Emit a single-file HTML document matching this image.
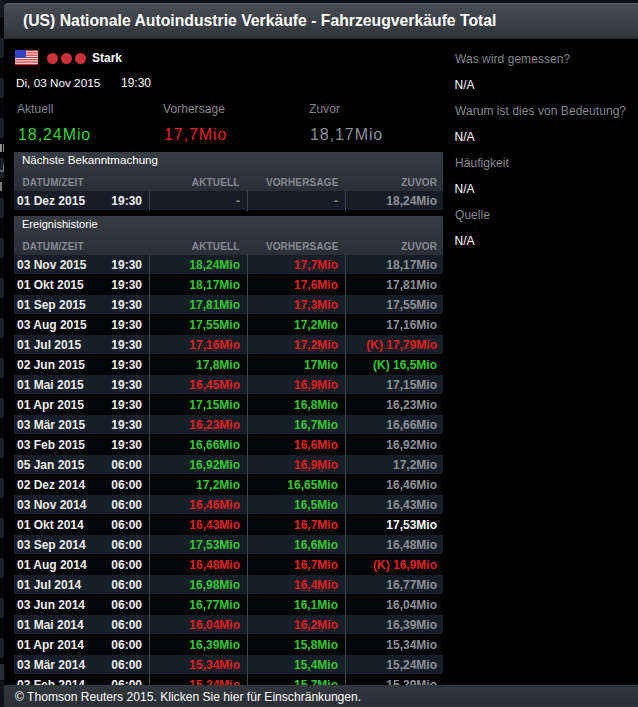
<!DOCTYPE html>
<html><head><meta charset="utf-8">
<style>
*{margin:0;padding:0;box-sizing:border-box}
html,body{width:638px;height:707px;overflow:hidden;background:#000;font-family:"Liberation Sans",sans-serif;position:relative}
.abs{position:absolute;white-space:nowrap}
#bg{position:absolute;left:0;top:0;width:638px;height:707px;background:#050607}
#pop{position:absolute;left:4px;top:3px;width:700px;height:720px;background:#000;border-radius:4px 0 0 0}
#title{position:absolute;left:4px;top:3px;width:700px;height:36px;border-radius:4px 0 0 0;background:linear-gradient(#484c53,#30343b);border-top:1px solid #5e6269;border-bottom:1px solid #24272c}
#ttl{left:23px;top:12px;font-size:15.75px;font-weight:bold;color:#fff}
.lbl{color:#84878b;font-size:12px;letter-spacing:0.05px}
.wt{color:#fff;font-size:12px}
.big{font-size:16px;letter-spacing:0.92px} .big.g{color:#36d236} .big.r{color:#e8222a}
.g{color:#2ec82e} .r{color:#e02020} .n{color:#8c9197} .w{color:#fff}
.sech{position:absolute;left:14px;width:429px;height:39px;background:linear-gradient(#373c44,#2a2f37);color:#fff;font-size:11.6px;padding-left:8px;line-height:16px}
.colh{position:absolute;left:14px;width:429px;height:22px;background:transparent;color:#858b93;font-size:10px;font-weight:bold;letter-spacing:0.15px}
.colh span{position:absolute;top:7.5px;white-space:nowrap}
.row{position:absolute;left:14px;width:429px;height:20px;font-size:12px;font-weight:bold}
.row.o{background:#161e28;height:19px}
.row.e{background:#030405}
.row span{position:absolute;top:2.5px;white-space:nowrap}
.row .d{left:3px;color:#eee}
.row .t{right:301px;color:#eee}
.row .a{right:203px}
.row .f{right:105px}
.row .p{right:6px}
.vl{position:absolute;width:1px;background:#40464e}
#foot{position:absolute;left:4px;top:685px;width:700px;height:22px;background:linear-gradient(#32363d,#2a2e35)}
</style></head><body>
<div id="bg"></div><div class="abs" style="left:0;top:0;width:638px;height:3px;background:#0d1217"></div>
<div class="abs" style="left:0;top:0;width:4px;height:17px;background:#15191e"></div><div class="abs" style="left:0;top:38px;width:4px;height:20px;background:#1b2128;border-radius:0 2px 2px 0"></div><div class="abs" style="left:0;top:78px;width:4px;height:20px;background:#1b2128;border-radius:0 2px 2px 0"></div><div class="abs" style="left:0;top:118px;width:4px;height:20px;background:#1b2128;border-radius:0 2px 2px 0"></div><div class="abs" style="left:0;top:158px;width:4px;height:20px;background:#1b2128;border-radius:0 2px 2px 0"></div><div class="abs" style="left:0;top:198px;width:4px;height:20px;background:#1b2128;border-radius:0 2px 2px 0"></div><div class="abs" style="left:0;top:238px;width:4px;height:20px;background:#1b2128;border-radius:0 2px 2px 0"></div><div class="abs" style="left:0;top:278px;width:4px;height:20px;background:#1b2128;border-radius:0 2px 2px 0"></div><div class="abs" style="left:0;top:318px;width:4px;height:20px;background:#1b2128;border-radius:0 2px 2px 0"></div><div class="abs" style="left:0;top:358px;width:4px;height:20px;background:#1b2128;border-radius:0 2px 2px 0"></div><div class="abs" style="left:0;top:398px;width:4px;height:20px;background:#1b2128;border-radius:0 2px 2px 0"></div><div class="abs" style="left:0;top:438px;width:4px;height:20px;background:#1b2128;border-radius:0 2px 2px 0"></div><div class="abs" style="left:0;top:478px;width:4px;height:20px;background:#1b2128;border-radius:0 2px 2px 0"></div><div class="abs" style="left:0;top:518px;width:4px;height:20px;background:#1b2128;border-radius:0 2px 2px 0"></div><div class="abs" style="left:0;top:558px;width:4px;height:20px;background:#1b2128;border-radius:0 2px 2px 0"></div><div class="abs" style="left:0;top:598px;width:4px;height:20px;background:#1b2128;border-radius:0 2px 2px 0"></div><div class="abs" style="left:0;top:638px;width:4px;height:20px;background:#1b2128;border-radius:0 2px 2px 0"></div><div class="abs" style="left:0;top:664px;width:4px;height:16px;background:#2a2e33"></div><div class="abs" style="left:0;top:680px;width:4px;height:27px;background:#0f1419"></div>
<div class="abs" style="left:0;top:144px;width:1.5px;height:8px;background:#8e8e8e"></div><div class="abs" style="left:3px;top:144px;width:1.5px;height:8px;background:#8e8e8e"></div><div class="abs" style="left:3px;top:164px;width:1.2px;height:8px;background:#6a7886"></div><div class="abs" style="left:0;top:170px;width:4px;height:1.5px;background:#5a6876"></div><div class="abs" style="left:0;top:182px;width:2px;height:9px;background:#7a7a7a"></div>
<div id="pop"></div>
<div id="title"></div>
<div id="ttl" class="abs">(US) Nationale Autoindustrie Verkäufe - Fahrzeugverkäufe Total</div>
<svg class="abs" style="left:15px;top:50px" width="23" height="15" viewBox="0 0 23 15">
<rect width="23" height="15" fill="#fff2f2"/>
<g fill="#d42a2a"><rect y="0" width="23" height="1.15"/><rect y="2.3" width="23" height="1.15"/><rect y="4.6" width="23" height="1.15"/><rect y="6.9" width="23" height="1.15"/><rect y="9.2" width="23" height="1.15"/><rect y="11.5" width="23" height="1.15"/><rect y="13.8" width="23" height="1.2"/></g>
<rect width="11" height="8" fill="#3344c0"/>
</svg>
<div class="abs" style="left:47px;top:52.7px;width:11.2px;height:11.2px;border-radius:50%;background:#cc3038"></div>
<div class="abs" style="left:61px;top:52.7px;width:11.2px;height:11.2px;border-radius:50%;background:#cc3038"></div>
<div class="abs" style="left:75px;top:52.7px;width:11.2px;height:11.2px;border-radius:50%;background:#cc3038"></div>
<div class="abs" style="left:92px;top:51px;font-size:12px;font-weight:bold;color:#fff">Stark</div>
<div class="abs wt" style="left:16px;top:76px;font-size:11.75px">Di, 03 Nov 2015</div>
<div class="abs wt" style="left:121px;top:76px">19:30</div>
<div class="abs lbl" style="left:17px;top:102px">Aktuell</div>
<div class="abs lbl" style="left:163px;top:102px">Vorhersage</div>
<div class="abs lbl" style="left:309px;top:102px">Zuvor</div>
<div class="abs big g" style="left:18px;top:125.5px">18,24Mio</div>
<div class="abs big r" style="left:164px;top:125.5px">17,7Mio</div>
<div class="abs big n" style="left:310px;top:125.5px">18,17Mio</div>

<div class="sech" style="top:152px">Nächste Bekanntmachung</div>
<div class="colh" style="top:169px"><span style="left:8.5px">DATUM/ZEIT</span><span style="right:203.5px">AKTUELL</span><span style="right:104.5px">VORHERSAGE</span><span style="right:6px">ZUVOR</span></div>
<div class="row o" style="top:191px;background:#161d26"><span class="d">01 Dez 2015</span><span class="t">19:30</span><span class="a n">-</span><span class="f n">-</span><span class="p n">18,24Mio</span></div>

<div class="sech" style="top:216px;font-size:11.05px">Ereignishistorie</div>
<div class="colh" style="top:233px"><span style="left:8.5px">DATUM/ZEIT</span><span style="right:203.5px">AKTUELL</span><span style="right:104.5px">VORHERSAGE</span><span style="right:6px">ZUVOR</span></div>
<div class="row o" style="top:255px"><span class="d">03 Nov 2015</span><span class="t">19:30</span><span class="a g">18,24Mio</span><span class="f r">17,7Mio</span><span class="p n">18,17Mio</span></div>
<div class="row e" style="top:275px"><span class="d">01 Okt 2015</span><span class="t">19:30</span><span class="a g">18,17Mio</span><span class="f r">17,6Mio</span><span class="p n">17,81Mio</span></div>
<div class="row o" style="top:295px"><span class="d">01 Sep 2015</span><span class="t">19:30</span><span class="a g">17,81Mio</span><span class="f r">17,3Mio</span><span class="p n">17,55Mio</span></div>
<div class="row e" style="top:315px"><span class="d">03 Aug 2015</span><span class="t">19:30</span><span class="a g">17,55Mio</span><span class="f g">17,2Mio</span><span class="p n">17,16Mio</span></div>
<div class="row o" style="top:335px"><span class="d">01 Jul 2015</span><span class="t">19:30</span><span class="a r">17,16Mio</span><span class="f r">17,2Mio</span><span class="p r">(K) 17,79Mio</span></div>
<div class="row e" style="top:355px"><span class="d">02 Jun 2015</span><span class="t">19:30</span><span class="a g">17,8Mio</span><span class="f g">17Mio</span><span class="p g">(K) 16,5Mio</span></div>
<div class="row o" style="top:375px"><span class="d">01 Mai 2015</span><span class="t">19:30</span><span class="a r">16,45Mio</span><span class="f r">16,9Mio</span><span class="p n">17,15Mio</span></div>
<div class="row e" style="top:395px"><span class="d">01 Apr 2015</span><span class="t">19:30</span><span class="a g">17,15Mio</span><span class="f g">16,8Mio</span><span class="p n">16,23Mio</span></div>
<div class="row o" style="top:415px"><span class="d">03 Mär 2015</span><span class="t">19:30</span><span class="a r">16,23Mio</span><span class="f g">16,7Mio</span><span class="p n">16,66Mio</span></div>
<div class="row e" style="top:435px"><span class="d">03 Feb 2015</span><span class="t">19:30</span><span class="a g">16,66Mio</span><span class="f r">16,6Mio</span><span class="p n">16,92Mio</span></div>
<div class="row o" style="top:455px"><span class="d">05 Jan 2015</span><span class="t">06:00</span><span class="a g">16,92Mio</span><span class="f r">16,9Mio</span><span class="p n">17,2Mio</span></div>
<div class="row e" style="top:475px"><span class="d">02 Dez 2014</span><span class="t">06:00</span><span class="a g">17,2Mio</span><span class="f g">16,65Mio</span><span class="p n">16,46Mio</span></div>
<div class="row o" style="top:495px"><span class="d">03 Nov 2014</span><span class="t">06:00</span><span class="a r">16,46Mio</span><span class="f g">16,5Mio</span><span class="p n">16,43Mio</span></div>
<div class="row e" style="top:515px"><span class="d">01 Okt 2014</span><span class="t">06:00</span><span class="a r">16,43Mio</span><span class="f r">16,7Mio</span><span class="p w">17,53Mio</span></div>
<div class="row o" style="top:535px"><span class="d">03 Sep 2014</span><span class="t">06:00</span><span class="a g">17,53Mio</span><span class="f g">16,6Mio</span><span class="p n">16,48Mio</span></div>
<div class="row e" style="top:555px"><span class="d">01 Aug 2014</span><span class="t">06:00</span><span class="a r">16,48Mio</span><span class="f r">16,7Mio</span><span class="p r">(K) 16,9Mio</span></div>
<div class="row o" style="top:575px"><span class="d">01 Jul 2014</span><span class="t">06:00</span><span class="a g">16,98Mio</span><span class="f r">16,4Mio</span><span class="p n">16,77Mio</span></div>
<div class="row e" style="top:595px"><span class="d">03 Jun 2014</span><span class="t">06:00</span><span class="a g">16,77Mio</span><span class="f g">16,1Mio</span><span class="p n">16,04Mio</span></div>
<div class="row o" style="top:615px"><span class="d">01 Mai 2014</span><span class="t">06:00</span><span class="a r">16,04Mio</span><span class="f r">16,2Mio</span><span class="p n">16,39Mio</span></div>
<div class="row e" style="top:635px"><span class="d">01 Apr 2014</span><span class="t">06:00</span><span class="a g">16,39Mio</span><span class="f g">15,8Mio</span><span class="p n">15,34Mio</span></div>
<div class="row o" style="top:655px"><span class="d">03 Mär 2014</span><span class="t">06:00</span><span class="a r">15,34Mio</span><span class="f g">15,4Mio</span><span class="p n">15,24Mio</span></div>
<div class="row e" style="top:675px"><span class="d">03 Feb 2014</span><span class="t">06:00</span><span class="a r">15,24Mio</span><span class="f g">15,7Mio</span><span class="p n">15,39Mio</span></div>
<div class="vl" style="left:149px;top:255px;height:440px"></div><div class="vl" style="left:247px;top:255px;height:440px"></div><div class="vl" style="left:345px;top:255px;height:440px"></div>
<div class="vl" style="left:149px;top:191px;height:20px"></div><div class="vl" style="left:247px;top:191px;height:20px"></div><div class="vl" style="left:345px;top:191px;height:20px"></div>

<div class="abs lbl" style="left:455px;top:52px">Was wird gemessen?</div>
<div class="abs wt" style="left:454.5px;top:78px">N/A</div>
<div class="abs lbl" style="left:455px;top:104px">Warum ist dies von Bedeutung?</div>
<div class="abs wt" style="left:454.5px;top:130px">N/A</div>
<div class="abs lbl" style="left:455px;top:156px">Häufigkeit</div>
<div class="abs wt" style="left:454.5px;top:182px">N/A</div>
<div class="abs lbl" style="left:455px;top:208px">Quelle</div>
<div class="abs wt" style="left:454.5px;top:234px">N/A</div>

<div id="foot"></div>
<div class="abs" style="top:690px;font-size:12.1px;color:#fff;left:15px">© Thomson Reuters 2015. Klicken Sie hier für Einschränkungen.</div>
</body></html>
